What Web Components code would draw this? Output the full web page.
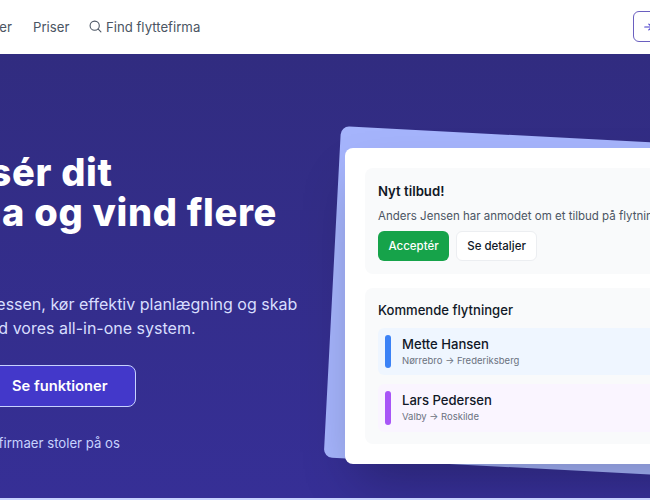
<!DOCTYPE html>
<html lang="da"><head><meta charset="utf-8"><title>Flyt</title>
<style>
html,body{margin:0;padding:0;background:#c7d2fe}
body{width:650px;height:500px;overflow:hidden;font-family:Inter,"Liberation Sans",sans-serif}
</style></head><body>
<site-page>
<site-header>
<nav-link slot="nav">Funktioner</nav-link>
<nav-link slot="nav">Priser</nav-link>
<nav-link slot="nav"><svg slot="icon" width="13" height="13" viewBox="0 0 24 24" fill="none" stroke="currentColor" stroke-width="2" stroke-linecap="round" stroke-linejoin="round"><circle cx="10.5" cy="10.5" r="8.5"/><path d="m22 22-5.4-5.4"/></svg>Find flyttefirma</nav-link>
</site-header>
<hero-section>
<hero-copy slot="copy"></hero-copy>
<app-card slot="visual">
<offer-panel></offer-panel>
<moves-panel>
<move-row name="Mette Hansen" route="Nørrebro → Frederiksberg" bar="#3b82f6" bg="#eff6ff"></move-row>
<move-row name="Lars Pedersen" route="Valby → Roskilde" bar="#a855f7" bg="#faf5ff"></move-row>
</moves-panel>
</app-card>
</hero-section>
</site-page>
<script>
const def=(n,html,init)=>customElements.define(n,class extends HTMLElement{
  connectedCallback(){ if(this.shadowRoot)return; const r=this.attachShadow({mode:'open'}); r.innerHTML=html; if(init)init(this,r); }
});
def('site-page',`<style>:host{display:block;width:650px;height:498px;overflow:hidden}</style><slot></slot>`);
def('site-header',`<style>
:host{display:flex;align-items:center;height:54px;box-sizing:border-box;padding-bottom:1px;background:#fff;overflow:hidden;width:650px}
nav{display:flex;align-items:center;gap:21px;margin-left:-54px;flex:none}
.cta{margin-left:auto;margin-right:-72px;flex:none;display:flex;align-items:center;gap:6px;height:31px;box-sizing:border-box;border:1.3px solid #6a5fc0;border-radius:6px;padding:0 12px 0 9px;color:#4338ca;font:500 13px Inter,sans-serif;background:#fff}
</style><nav><slot name="nav"></slot></nav><div class="cta"><svg width="14" height="14" viewBox="0 0 24 24" fill="none" stroke="currentColor" stroke-width="2" stroke-linecap="round" stroke-linejoin="round"><path d="M15 3h4a2 2 0 0 1 2 2v14a2 2 0 0 1-2 2h-4"/><path d="m10 17 5-5-5-5"/><path d="M15 12H3"/></svg><span>Log ind</span></div>`);
def('nav-link',`<style>:host{display:inline-flex;align-items:center;gap:4px;color:#4b5563;font:400 13.2px/20px Inter,sans-serif;white-space:nowrap}::slotted(svg){flex:none;margin-left:-1.5px}</style><slot name="icon"></slot><slot></slot>`);
def('hero-section',`<style>
:host{display:flex;align-items:flex-start;height:444px;width:650px;overflow:hidden;background:linear-gradient(180deg,#312c80,#362f96)}
.c{flex:none;width:345px}
.v{flex:none;padding-top:94px}
</style><div class="c"><slot name="copy"></slot></div><div class="v"><slot name="visual"></slot></div>`);
def('hero-copy',`<style>
:host{display:block;width:345px;padding-top:98px;color:#fff}
h1{margin:0 0 60px;font:800 38px/40px Inter,sans-serif;white-space:nowrap;letter-spacing:.7px}
h1 span,p span{display:block}
.l1{margin-left:-190px}.l2{margin-left:-184px}
p{margin:0 0 25px;font:400 16px/24px Inter,sans-serif;color:#d8defe;white-space:nowrap}
.p1{margin-left:-103px}.p2{margin-left:-25px}
.b{display:flex;gap:16px;margin-left:-17px}
.btn{box-sizing:border-box;height:42px;display:flex;align-items:center;padding:0 28px;border:1.3px solid #c7d2fe;border-radius:8px;background:#4338ca;color:#fff;font:600 14.7px Inter,sans-serif;white-space:nowrap}
.t{margin:26px 0 0 -33px;font:400 13.2px/20px Inter,sans-serif;color:#c7d2fe;white-space:nowrap}
</style><h1><span class="l1">Automatisér dit</span><span class="l2">flyttefirma og vind flere</span></h1>
<p><span class="p1">Optimér processen, kør effektiv planlægning og skab</span><span class="p2">med vores all-in-one system.</span></p>
<div class="b"><div class="btn">Se funktioner</div></div><div class="t">flyttefirmaer stoler på os</div>`);
def('app-card',`<style>
:host{display:block;position:relative;width:520px}
.back{position:absolute;inset:0;background:#a5b4fc;border-radius:8px;transform:rotate(3deg) scale(1.05)}
.front{position:relative;display:flex;flex-direction:column;gap:14px;padding:20px;background:#fff;border-radius:8px;box-shadow:0 25px 50px -12px rgba(0,0,0,.25)}
</style><div class="back"></div><div class="front"><slot></slot></div>`);
def('offer-panel',`<style>
:host{display:block;background:#f9fafb;border-radius:8px;padding:13px;height:106px;box-sizing:border-box}
h3{margin:0 0 6px;font:600 13.2px/20px Inter,sans-serif;color:#111827}
p{margin:0 0 6px;font:400 11.5px/18px Inter,sans-serif;color:#4b5563;white-space:nowrap}
.r{display:flex;gap:7px}
.a,.s{height:30px;box-sizing:border-box;display:flex;align-items:center;padding:0 10px;border-radius:6px;font:500 11.5px Inter,sans-serif}
.a{background:#16a34a;color:#fff;padding:0 10.5px}.s{background:#fff;border:1px solid #eceef1;color:#111827}
</style><h3>Nyt tilbud!</h3><p>Anders Jensen har anmodet om et tilbud på flytning fra København</p><div class="r"><div class="a">Acceptér</div><div class="s">Se detaljer</div></div>`);
def('moves-panel',`<style>
:host{display:block;background:#f9fafb;border-radius:8px;padding:12px 13px 12px}
h3{margin:0 0 7.5px;font:500 13.1px/20px Inter,sans-serif;color:#111827}
.l{display:flex;flex-direction:column;gap:9px}
</style><h3>Kommende flytninger</h3><div class="l"><slot></slot></div>`);
def('move-row',`<style>
:host{display:flex;align-items:stretch;gap:11px;padding:7px;border-radius:6px}
.bar{width:6px;border-radius:3px;flex:none}
.n{font:500 13.1px/19px Inter,sans-serif;color:#111827}
.r{font:400 9.5px/14.5px Inter,sans-serif;color:#6b7280}
</style><div class="bar"></div><div><div class="n"></div><div class="r"></div></div>`,(h,r)=>{
  h.style.background=h.getAttribute('bg');
  r.querySelector('.bar').style.background=h.getAttribute('bar');
  r.querySelector('.n').textContent=h.getAttribute('name');
  r.querySelector('.r').textContent=h.getAttribute('route');
});
</script>
</body></html>
